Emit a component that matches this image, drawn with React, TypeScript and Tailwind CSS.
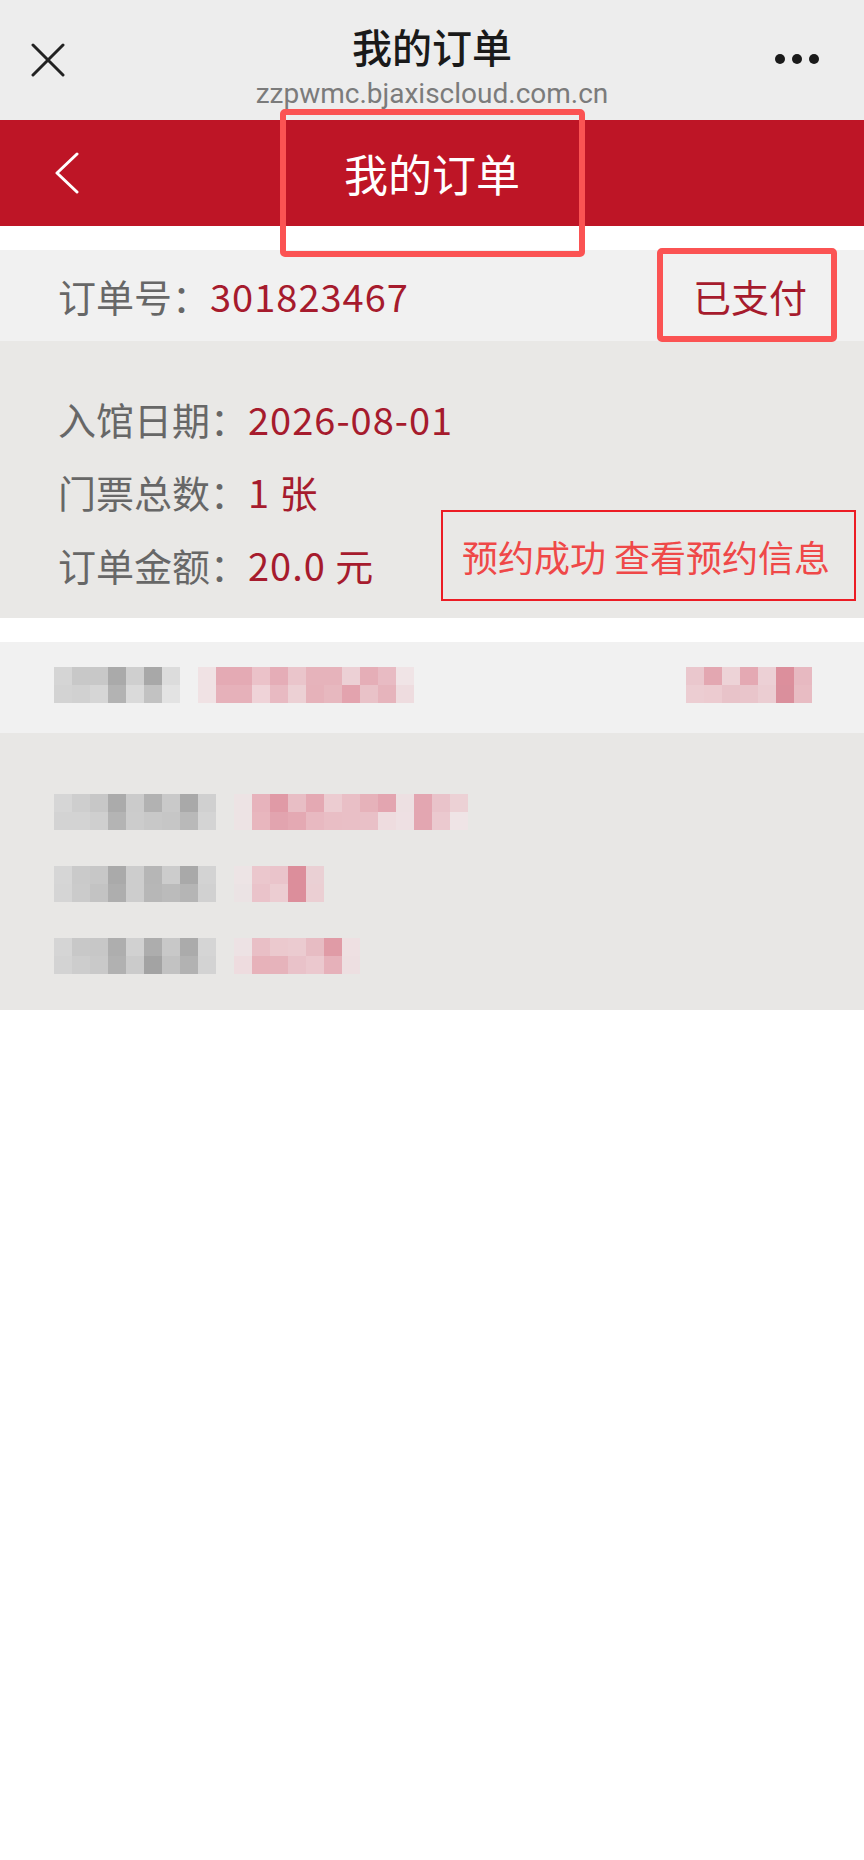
import React from "react";

type Strip = { top: string[]; bottom: string[] };

// pixelated (mosaic) text blocks in the hidden order card
const grayA: Strip = {
  top: ["bg-[#d5d5d5]", "bg-[#c8c8c8]", "bg-[#c8c8c8]", "bg-[#aaaaaa]", "bg-[#cfcfcf]", "bg-[#a8a8a8]", "bg-[#dcdcdc]"],
  bottom: ["bg-[#d3d3d3]", "bg-[#d1d1d1]", "bg-[#d6d6d6]", "bg-[#b3b3b3]", "bg-[#dadada]", "bg-[#c2c2c2]", "bg-[#e3e3e3]"],
};
const pinkA: Strip = {
  top: ["bg-[#f0e2e4]", "bg-[#e4aab4]", "bg-[#e4aab4]", "bg-[#ebc2c9]", "bg-[#e5adb7]", "bg-[#eac5cb]", "bg-[#e6b3bb]", "bg-[#e6b3bb]", "bg-[#ecd0d5]", "bg-[#e5aeb7]", "bg-[#e8bbc3]", "bg-[#f0e4e6]"],
  bottom: ["bg-[#f0e2e4]", "bg-[#e6b1ba]", "bg-[#e6b1ba]", "bg-[#efd3d8]", "bg-[#e8bac2]", "bg-[#ecd0d4]", "bg-[#e6b2ba]", "bg-[#e7b8bf]", "bg-[#e3a3ae]", "bg-[#e9c2c8]", "bg-[#e6b4bc]", "bg-[#eedcdf]"],
};
const pinkRight: Strip = {
  top: ["bg-[#eac7cd]", "bg-[#e3a7b1]", "bg-[#edd3d7]", "bg-[#e4a9b3]", "bg-[#ecd0d5]", "bg-[#dc8f9c]", "bg-[#e7b9c1]"],
  bottom: ["bg-[#eccdd2]", "bg-[#eccbd0]", "bg-[#e8c3c9]", "bg-[#e9c5cb]", "bg-[#ebcdd2]", "bg-[#da8f9c]", "bg-[#e8bcc3]"],
};

const rows: { gray: Strip; pink: Strip }[] = [
  {
    gray: {
      top: ["bg-[#d6d6d6]", "bg-[#cecece]", "bg-[#c7c7c7]", "bg-[#ababab]", "bg-[#cbcbcb]", "bg-[#b2b2b2]", "bg-[#c9c9c9]", "bg-[#a9a9a9]", "bg-[#d0d0d0]"],
      bottom: ["bg-[#d3d3d3]", "bg-[#d3d3d3]", "bg-[#cfcfcf]", "bg-[#b4b4b4]", "bg-[#cccccc]", "bg-[#c8c8c8]", "bg-[#c6c6c6]", "bg-[#b9b9b9]", "bg-[#d4d4d4]"],
    },
    pink: {
      top: ["bg-[#ede3e4]", "bg-[#e7b3bc]", "bg-[#e09aa6]", "bg-[#e8bec5]", "bg-[#e4a9b3]", "bg-[#ecccd1]", "bg-[#e9bfc6]", "bg-[#e6b2ba]", "bg-[#e3a5b0]", "bg-[#ede0e2]", "bg-[#e3a6b1]", "bg-[#e9c3ca]", "bg-[#ecd1d5]"],
      bottom: ["bg-[#ede3e4]", "bg-[#e8b6be]", "bg-[#e2a4af]", "bg-[#e4a9b3]", "bg-[#e8b9c1]", "bg-[#e9bec5]", "bg-[#e9bfc6]", "bg-[#e9c0c7]", "bg-[#eedcdf]", "bg-[#eee0e3]", "bg-[#e3a6b1]", "bg-[#ebc9cf]", "bg-[#efe4e6]"],
    },
  },
  {
    gray: {
      top: ["bg-[#d6d6d6]", "bg-[#cacaca]", "bg-[#c7c7c7]", "bg-[#aaaaaa]", "bg-[#cdcdcd]", "bg-[#b6b6b6]", "bg-[#cccccc]", "bg-[#a9a9a9]", "bg-[#d3d3d3]"],
      bottom: ["bg-[#d5d5d5]", "bg-[#cbcbcb]", "bg-[#c3c3c3]", "bg-[#aeaeae]", "bg-[#cdcdcd]", "bg-[#b7b7b7]", "bg-[#bbbbbb]", "bg-[#b5b5b5]", "bg-[#d1d1d1]"],
    },
    pink: {
      top: ["bg-[#ede4e5]", "bg-[#ebc7cd]", "bg-[#eac4cb]", "bg-[#dc8e9b]", "bg-[#ead0d4]"],
      bottom: ["bg-[#ebe3e4]", "bg-[#eac3ca]", "bg-[#eccdd2]", "bg-[#dc8e9b]", "bg-[#ebcfd3]"],
    },
  },
  {
    gray: {
      top: ["bg-[#d5d5d5]", "bg-[#c8c8c8]", "bg-[#c7c7c7]", "bg-[#aeaeae]", "bg-[#d1d1d1]", "bg-[#adadad]", "bg-[#c8c8c8]", "bg-[#ababab]", "bg-[#d5d5d5]"],
      bottom: ["bg-[#d3d3d3]", "bg-[#cdcdcd]", "bg-[#c9c9c9]", "bg-[#b1b1b1]", "bg-[#cbcbcb]", "bg-[#a3a3a3]", "bg-[#c2c2c2]", "bg-[#b2b2b2]", "bg-[#d3d3d3]"],
    },
    pink: {
      top: ["bg-[#ede2e4]", "bg-[#e9bfc6]", "bg-[#ebc9ce]", "bg-[#ebcbd0]", "bg-[#e7bcc3]", "bg-[#e09ba6]", "bg-[#eee0e2]"],
      bottom: ["bg-[#eedcdf]", "bg-[#e7b2ba]", "bg-[#e6b3bb]", "bg-[#e9c2c9]", "bg-[#ebc8ce]", "bg-[#e6b1ba]", "bg-[#eddfe1]"],
    },
  },
];

function Mosaic({ strip }: { strip: Strip }) {
  return (
    <div className="flex flex-col shrink-0">
      <div className="flex">
        {strip.top.map((c, i) => (
          <div key={i} className={`w-[18px] h-[18px] ${c}`} />
        ))}
      </div>
      <div className="flex">
        {strip.bottom.map((c, i) => (
          <div key={i} className={`w-[18px] h-[18px] ${c}`} />
        ))}
      </div>
    </div>
  );
}

function InfoLine({ label, value }: { label: string; value: string }) {
  return (
    <div className="flex leading-[73px] text-[38px] whitespace-nowrap">
      <span className="text-[#676767]">{label}</span>
      <span className="text-[#a61b2d] tracking-[1px]">{value}</span>
    </div>
  );
}

export default function App() {
  return (
    <div className="relative w-[864px] min-h-[1860px] bg-white font-['Noto_Sans_CJK_SC','Noto_Sans',sans-serif]">
      {/* WeChat top bar */}
      <div className="grid grid-cols-[134px_1fr_134px] h-[120px] bg-[#ededed]">
        <div className="flex items-center pl-[31px]">
          <svg width="34" height="34" viewBox="0 0 34 34">
            <path d="M2 2 L32 32 M32 2 L2 32" stroke="#222" strokeWidth="3" strokeLinecap="round" />
          </svg>
        </div>
        <div className="flex flex-col items-center pt-[22px]">
          <div className="text-[40px] leading-[48px] font-medium text-[#1a1a1a]">我的订单</div>
          <div className="mt-[8px] text-[28px] leading-[32px] text-[#7b7b7b] font-['Roboto',sans-serif] whitespace-nowrap">
            zzpwmc.bjaxiscloud.com.cn
          </div>
        </div>
        <div className="flex items-center justify-center gap-[7px] pb-[2px]">
          <span className="w-[10px] h-[10px] rounded-full bg-[#1a1a1a]" />
          <span className="w-[10px] h-[10px] rounded-full bg-[#1a1a1a]" />
          <span className="w-[10px] h-[10px] rounded-full bg-[#1a1a1a]" />
        </div>
      </div>

      {/* red page header */}
      <div className="grid grid-cols-[134px_1fr_134px] h-[106px] bg-[#be1526]">
        <div className="flex items-center pl-[54px]">
          <svg width="26" height="42" viewBox="0 0 26 42">
            <path d="M23 2 L3 21 L23 40" fill="none" stroke="#fff" strokeWidth="3" strokeLinecap="round" strokeLinejoin="round" />
          </svg>
        </div>
        <div className="flex items-center justify-center text-[44px] text-white">我的订单</div>
        <div />
      </div>

      <div className="h-[24px]" />

      {/* order card */}
      <div className="flex items-center justify-between h-[91px] bg-[#f1f1f1] pl-[58px] pr-[57px] text-[38px] whitespace-nowrap">
        <div className="flex">
          <span className="text-[#676767]">订单号：</span>
          <span className="text-[#a61b2d] tracking-[1px]">301823467</span>
        </div>
        <span className="text-[#a61b2d]">已支付</span>
      </div>
      <div className="grid h-[277px] bg-[#e9e8e6] pl-[58px] pr-[8px] pt-[41px] pb-[22px]">
        <div className="col-start-1 row-start-1 flex flex-col">
          <InfoLine label="入馆日期：" value="2026-08-01" />
          <InfoLine label="门票总数：" value="1 张" />
          <InfoLine label="订单金额：" value="20.0 元" />
        </div>
        <div className="col-start-1 row-start-1 justify-self-end self-end flex items-center w-[415px] h-[91px] border-2 border-[#ec1c24] pl-[19px] text-[36px] text-[#ef4848] whitespace-nowrap">
          预约成功 查看预约信息
        </div>
      </div>

      <div className="h-[24px]" />

      {/* second card, pixelated */}
      <div className="flex justify-between h-[91px] bg-[#f1f1f1] pl-[54px] pr-[52px] pt-[25px]">
        <div className="flex gap-[18px]">
          <Mosaic strip={grayA} />
          <Mosaic strip={pinkA} />
        </div>
        <Mosaic strip={pinkRight} />
      </div>
      <div className="flex flex-col gap-[36px] h-[277px] bg-[#e8e7e5] pl-[54px] pt-[61px]">
        {rows.map((r, i) => (
          <div key={i} className="flex gap-[18px]">
            <Mosaic strip={r.gray} />
            <Mosaic strip={r.pink} />
          </div>
        ))}
      </div>

      {/* annotation frames drawn over the screenshot */}
      <div className="absolute left-[280px] top-[109px] w-[305px] h-[148px] border-[6px] border-[#fb5353] rounded-[5px]" />
      <div className="absolute left-[657px] top-[248px] w-[180px] h-[94px] border-[6px] border-[#fb5353] rounded-[5px]" />
    </div>
  );
}
